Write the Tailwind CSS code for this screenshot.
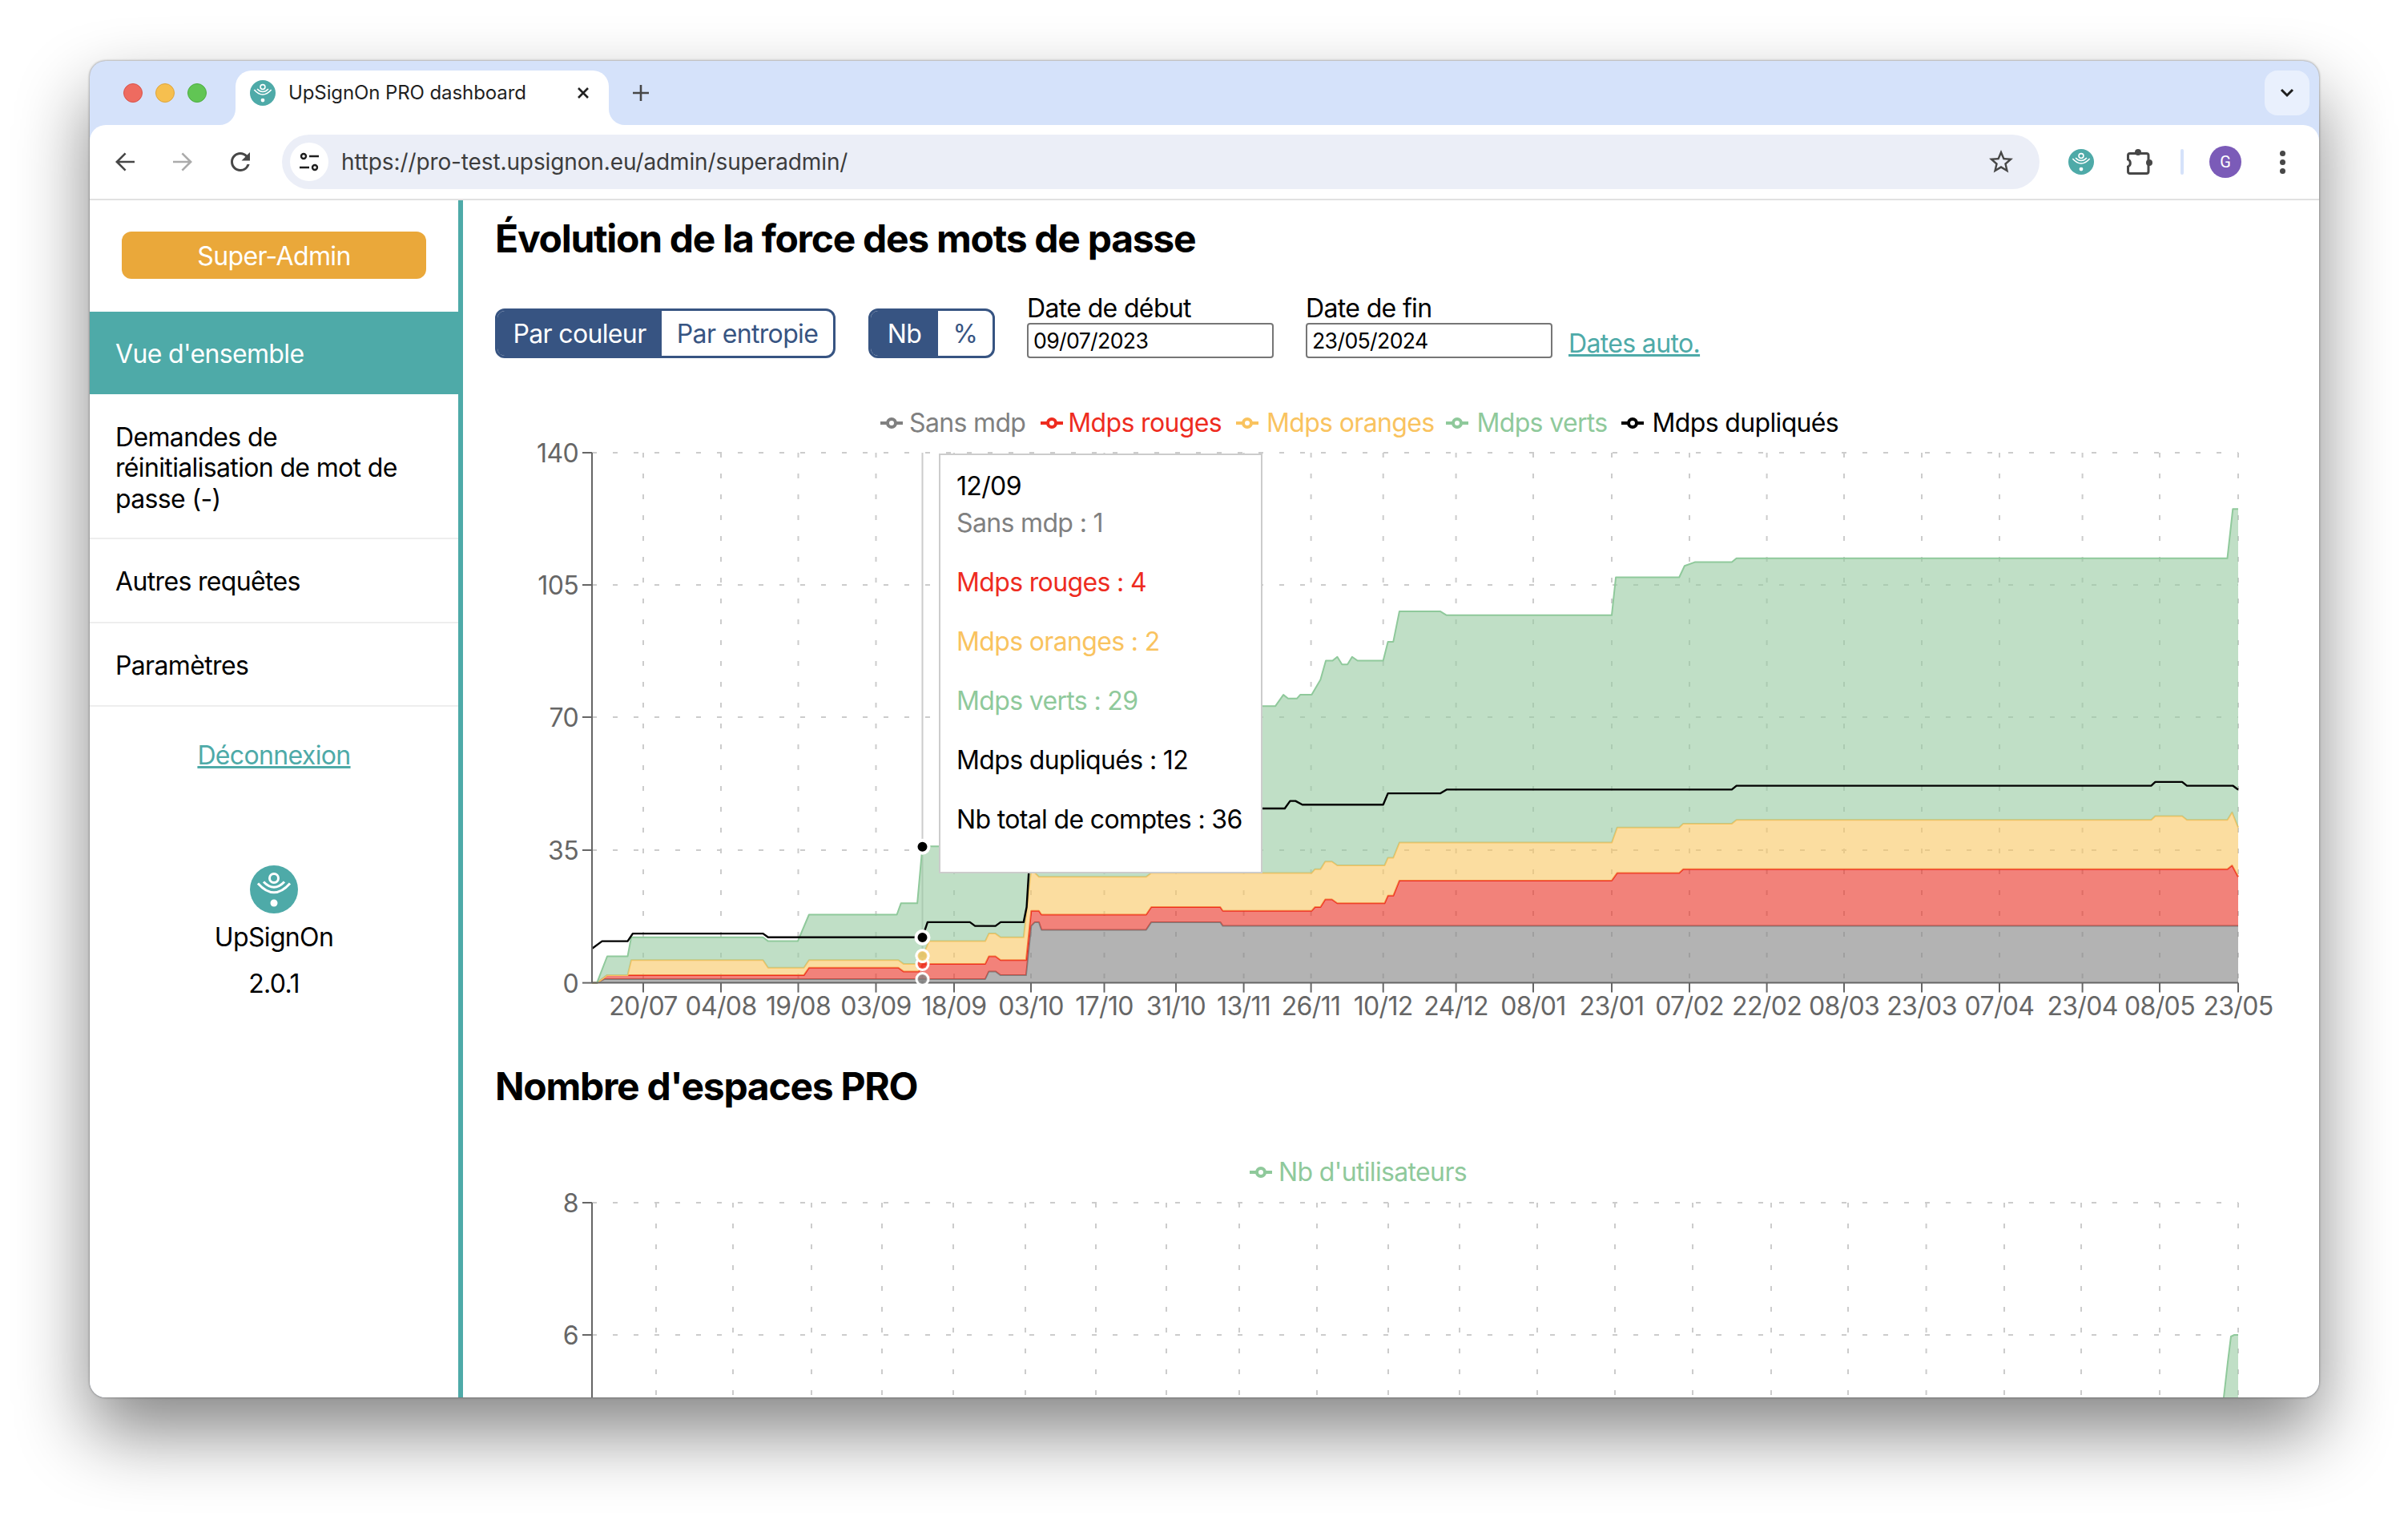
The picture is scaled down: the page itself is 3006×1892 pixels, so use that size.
<!DOCTYPE html>
<html lang="fr">
<head>
<meta charset="utf-8">
<title>UpSignOn PRO dashboard</title>
<script src="https://cdn.jsdelivr.net/npm/@tailwindcss/browser@4"></script>
</head>
<body class="w-[3006px] h-[1892px] overflow-hidden bg-white font-['Inter',sans-serif] text-black">
<svg class="hidden"><symbol id="logo" viewBox="0 0 60 60"><circle cx="30" cy="30" r="30" fill="#4eaaa8"/><circle cx="30" cy="16" r="5.5" fill="none" stroke="#fff" stroke-width="3"/><path d="M17 20.5Q30 34 43 20.5" fill="none" stroke="#fff" stroke-width="3"/><path d="M10 22.500Q30 45 50 22.500" fill="none" stroke="#fff" stroke-width="3"/><circle cx="30" cy="47" r="4.500" fill="#fff"/></symbol></svg>
<div class="pt-[76px] pl-[112px]">
<div class="w-[2783px] h-[1668px] rounded-[20px] overflow-hidden bg-[#d5e2fa] flex flex-col shadow-[0_44px_90px_rgba(0,0,0,0.48),0_0_3px_rgba(0,0,0,0.5)]">
  <!-- tab strip -->
  <div class="h-[80px] shrink-0 flex items-end relative">
    <div class="flex gap-[16px] ml-[42px] mb-[28px]">
      <span class="w-[24px] h-[24px] rounded-full bg-[#ee6b60] border border-[#d9534a]"></span>
      <span class="w-[24px] h-[24px] rounded-full bg-[#f6bf4f] border border-[#dfa53a]"></span>
      <span class="w-[24px] h-[24px] rounded-full bg-[#61c554] border border-[#4ead41]"></span>
    </div>
    <div class="relative ml-[36px] w-[466px] h-[68px] bg-white rounded-t-[20px] flex items-center pl-[18px] pb-[12px]">
      <svg class="absolute -left-[20px] bottom-0 w-[20px] h-[20px]" viewBox="0 0 20 20"><path d="M20 0V20H0A20 20 0 0 0 20 0Z" fill="#fff"/></svg>
      <svg class="absolute -right-[20px] bottom-0 w-[20px] h-[20px]" viewBox="0 0 20 20"><path d="M0 0V20H20A20 20 0 0 1 0 0Z" fill="#fff"/></svg>
      <svg class="w-[32px] h-[32px] shrink-0"><use href="#logo"/></svg>
      <span class="ml-[16px] text-[24px] leading-[32px] text-[#1f1f1f] whitespace-nowrap tracking-[-0.1px]">UpSignOn PRO dashboard</span>
      <svg class="absolute left-[426px] top-[20px] w-[16px] h-[16px]" viewBox="0 0 16 16"><path d="M2 2L14 14M14 2L2 14" stroke="#222" stroke-width="2.600"/></svg>
    </div>
    <svg class="ml-[29px] mb-[29px] w-[22px] h-[22px]" viewBox="0 0 22 22"><path d="M11 1V21M1 11H21" stroke="#474747" stroke-width="2.600"/></svg>
    <div class="ml-auto mr-[12px] mb-[12px] w-[56px] h-[56px] rounded-[16px] bg-[#e9f0fd] flex items-center justify-center">
      <svg class="w-[18px] h-[12px]" viewBox="0 0 18 12"><path d="M2 2L9 9L16 2" fill="none" stroke="#1f1f1f" stroke-width="3"/></svg>
    </div>
  </div>
  <!-- toolbar -->
  <div class="h-[94px] shrink-0 bg-white rounded-t-[20px] border-b-2 border-[#e1e1e1] flex items-center">
    <svg class="ml-[26px] w-[36px] h-[36px]" viewBox="0 0 24 24" fill="#474747"><path d="M20 11.100H7.400l5.600-5.600L11.800 4.300 4 12l7.800 7.700 1.200-1.200-5.600-5.600H20z"/></svg>
    <svg class="ml-[36px] w-[36px] h-[36px]" viewBox="0 0 24 24" fill="#ababab"><path d="M4 11.100h12.600L11 5.500l1.200-1.200L20 12l-7.800 7.700-1.200-1.200 5.600-5.600H4z"/></svg>
    <svg class="ml-[36px] w-[36px] h-[36px]" viewBox="0 0 24 24" fill="#474747"><path d="M17.650 6.350A7.958 7.958 0 0012 4c-4.420 0-7.990 3.580-7.990 8s3.570 8 7.990 8c3.730 0 6.840-2.550 7.730-6h-2.080A5.990 5.990 0 0112 18c-3.310 0-6-2.690-6-6s2.690-6 6-6c1.660 0 3.140.69 4.220 1.780L13 11h7V4l-2.350 2.350z"/></svg>
    <div class="ml-[34px] w-[2194px] h-[68px] rounded-full bg-[#ebeef7] flex items-center pl-[10px]">
      <div class="w-[48px] h-[48px] rounded-full bg-white flex items-center justify-center">
        <svg class="w-[26px] h-[26px]" viewBox="0 0 26 26" fill="none" stroke="#1f1f1f" stroke-width="2.400"><circle cx="6" cy="6" r="3"/><path d="M13 6H25M1 20H13"/><circle cx="20" cy="20" r="3"/></svg>
      </div>
      <span class="ml-[16px] text-[28px] leading-[40px] text-[#3c3c3c] whitespace-nowrap tracking-[-0.12px]">https://pro-test.upsignon.eu/admin/superadmin/</span>
      <svg class="ml-auto mr-[30px] w-[36px] h-[36px]" viewBox="0 0 24 24" fill="#474747"><path d="M22 9.240l-7.190-.62L12 2 9.190 8.630 2 9.240l5.460 4.730L5.820 21 12 17.270 18.180 21l-1.630-7.030L22 9.240zM12 15.400l-3.760 2.270 1-4.280-3.320-2.880 4.380-.38L12 6.100l1.710 4.040 4.380.38-3.320 2.880 1 4.280L12 15.400z"/></svg>
    </div>
    <svg class="ml-[36px] w-[32px] h-[32px]"><use href="#logo"/></svg>
    <svg class="ml-[39px] w-[34px] h-[34px]" viewBox="0 0 34 34"><path d="M6 6.500H26.500A2.500 2.500 0 0 1 29 9V13.500V22.500V29A2.500 2.500 0 0 1 26.500 31.500H6A2.500 2.500 0 0 1 3.500 29V23A5 5 0 0 0 3.500 14V9A2.500 2.500 0 0 1 6 6.500Z" fill="none" stroke="#474747" stroke-width="3"/><circle cx="16" cy="5" r="4" fill="#474747"/><circle cx="30" cy="18" r="4" fill="#474747"/></svg>
    <span class="ml-[35px] w-[4px] h-[32px] rounded-full bg-[#d5e2fa]"></span>
    <div class="ml-[32px] w-[40px] h-[40px] rounded-full bg-[#7b5bb8] flex items-center justify-center text-[20px] leading-none text-white font-['Roboto',sans-serif]">G</div>
    <div class="ml-[48px] flex flex-col gap-[4px]">
      <span class="w-[7px] h-[7px] rounded-full bg-[#474747]"></span>
      <span class="w-[7px] h-[7px] rounded-full bg-[#474747]"></span>
      <span class="w-[7px] h-[7px] rounded-full bg-[#474747]"></span>
    </div>
  </div>
  <!-- page -->
  <div class="flex-1 min-h-0 flex bg-white">
    <aside class="w-[466px] shrink-0 border-r-[6px] border-[#4eaaa8] flex flex-col items-stretch tracking-[-0.65px]">
      <div class="px-[40px] pt-[39px] pb-[41px]">
        <div class="h-[59px] rounded-[12px] bg-[#eaa83a] text-white text-[32px] leading-[61px] text-center">Super-Admin</div>
      </div>
      <div class="h-[103px] bg-[#4eaaa8] text-white text-[32px] leading-[38.400px] px-[32px] pt-[34px]">Vue d'ensemble</div>
      <div class="text-[32px] leading-[38.400px] px-[32px] pt-[35px] pb-[29px] border-b-2 border-[#eeeeee]">Demandes de réinitialisation de mot de passe (-)</div>
      <div class="text-[32px] leading-[38.400px] px-[32px] pt-[34px] pb-[30px] border-b-2 border-[#eeeeee]">Autres requêtes</div>
      <div class="text-[32px] leading-[38.400px] px-[32px] pt-[34px] pb-[30px] border-b-2 border-[#eeeeee]">Paramètres</div>
      <div class="mt-[41px] text-center text-[32px] leading-[40px] text-[#4eaaa8] underline">Déconnexion</div>
      <div class="mt-[117px] flex flex-col items-center text-[32px]">
        <svg class="w-[60px] h-[60px]"><use href="#logo"/></svg>
        <div class="mt-[10px] leading-[40px]">UpSignOn</div>
        <div class="mt-[18px] leading-[40px]">2.0.1</div>
      </div>
    </aside>
    <main class="flex-1 min-w-0 overflow-hidden tracking-[-0.65px]">
      <h1 class="pl-[40px] pt-[19px] text-[48px] leading-[58px] font-bold tracking-[-1.28px]">Évolution de la force des mots de passe</h1>
      <div class="pl-[40px] mt-[38px] flex items-end text-[32px]">
        <div class="flex h-[62px] w-[425px] rounded-[12px] border-[3px] border-[#375482] overflow-hidden leading-[58px]">
          <div class="w-[205px] bg-[#375482] text-white text-center">Par couleur</div>
          <div class="flex-1 text-[#375482] text-center">Par entropie</div>
        </div>
        <div class="ml-[41px] flex h-[62px] w-[158px] rounded-[12px] border-[3px] border-[#375482] overflow-hidden leading-[58px]">
          <div class="w-[84px] bg-[#375482] text-white text-center">Nb</div>
          <div class="flex-1 text-[#375482] text-center">%</div>
        </div>
        <label class="ml-[40px] block w-[308px]">
          <div class="leading-[38px] relative top-[1px]">Date de début</div>
          <input type="text" value="09/07/2023" class="block w-full h-[44px] border-2 border-[#767676] rounded-[4px] px-[6px] text-[26.670px] text-black bg-white">
        </label>
        <label class="ml-[40px] block w-[308px]">
          <div class="leading-[38px] relative top-[1px]">Date de fin</div>
          <input type="text" value="23/05/2024" class="block w-full h-[44px] border-2 border-[#767676] rounded-[4px] px-[6px] text-[26.670px] text-black bg-white">
        </label>
        <div class="ml-[20px] leading-[36px] text-[#4eaaa8] underline">Dates auto.</div>
      </div>
      <div class="mt-[61px] mb-[-1px] h-[40px] ml-[521px] flex items-center text-[32px] leading-[40px] whitespace-nowrap">
        <svg class="w-[28px] h-[14px] mr-[8px]" viewBox="0 0 28 14"><path d="M0 7H28" stroke="#808080" stroke-width="4"/><circle cx="14" cy="7" r="5" fill="#fff" stroke="#808080" stroke-width="4"/></svg><span class="text-[#808080]">Sans mdp</span>
        <svg class="ml-[19px] w-[28px] h-[14px] mr-[6px]" viewBox="0 0 28 14"><path d="M0 7H28" stroke="#ee2c1f" stroke-width="4"/><circle cx="14" cy="7" r="5" fill="#fff" stroke="#ee2c1f" stroke-width="4"/></svg><span class="text-[#ee2c1f]">Mdps rouges</span>
        <svg class="ml-[18px] w-[28px] h-[14px] mr-[10px]" viewBox="0 0 28 14"><path d="M0 7H28" stroke="#f9c35f" stroke-width="4"/><circle cx="14" cy="7" r="5" fill="#fff" stroke="#f9c35f" stroke-width="4"/></svg><span class="text-[#f9c35f]">Mdps oranges</span>
        <svg class="ml-[15px] w-[28px] h-[14px] mr-[10px]" viewBox="0 0 28 14"><path d="M0 7H28" stroke="#8fc99b" stroke-width="4"/><circle cx="14" cy="7" r="5" fill="#fff" stroke="#8fc99b" stroke-width="4"/></svg><span class="text-[#8fc99b]">Mdps verts</span>
        <svg class="ml-[17px] w-[28px] h-[14px] mr-[11px]" viewBox="0 0 28 14"><path d="M0 7H28" stroke="#000" stroke-width="4"/><circle cx="14" cy="7" r="5" fill="#fff" stroke="#000" stroke-width="4"/></svg><span>Mdps dupliqués</span>
      </div>
      <div class="relative h-[743px]">
        <svg id="chart1" class="block w-[2316px] h-[743px]" viewBox="578 547 2316 743" font-size="32" fill="#666"></svg>
        <div class="absolute left-[594px] top-[19px] w-[404px] h-[524px] bg-white border-2 border-[#cccccc] pl-[20px] pt-[15px] text-[32px] leading-[48px] whitespace-nowrap">
          <div class="h-[46px]">12/09</div>
          <div class="h-[74px] text-[#808080]">Sans mdp : 1</div>
          <div class="h-[74px] text-[#ee2c1f]">Mdps rouges : 4</div>
          <div class="h-[74px] text-[#f9c35f]">Mdps oranges : 2</div>
          <div class="h-[74px] text-[#8fc99b]">Mdps verts : 29</div>
          <div class="h-[74px]">Mdps dupliqués : 12</div>
          <div>Nb total de comptes : 36</div>
        </div>
      </div>
      <h2 class="pl-[40px] mt-[37px] text-[48px] leading-[58px] font-bold tracking-[-1.28px]">Nombre d'espaces PRO</h2>
      <div class="mt-[58px] h-[40px] ml-[982px] flex items-center text-[32px] leading-[40px] text-[#8fc99b] whitespace-nowrap">
        <svg class="w-[28px] h-[14px] mr-[8px]" viewBox="0 0 28 14"><path d="M0 7H28" stroke="#8fc99b" stroke-width="4"/><circle cx="14" cy="7" r="5" fill="#fff" stroke="#8fc99b" stroke-width="4"/></svg><span>Nb d'utilisateurs</span>
      </div>
      <svg id="chart2" class="block w-[2316px] h-[261px]" viewBox="578 1483 2316 261" font-size="32" fill="#666"></svg>
    </main>
  </div>
</div>
</div>
<script>
const NS='http://www.w3.org/2000/svg';
function el(p,n,a,t){const e=document.createElementNS(NS,n);for(const k in a)e.setAttribute(k,a[k]);if(t!==undefined)e.textContent=t;p.appendChild(e);return e;}
const X5=x=>640+x/1.568,X6=x=>1560+x/1.188,Y=v=>1226.6-v*4.73;
const mk=(a,b)=>a.map(p=>[X5(p[0]),Y(p[1])]).concat(b.map(p=>[X6(p[0]),Y(p[1])]));
const gray=mk([[155,0],[165,0],[180,1],[925,1],[932,3],[945,3],[955,2],[1005,2],[1015,15],[1022,16],[1030,16],[1035,14],[1240,14],[1250,16],[1385,16],[1390,15]],[[1466,15]]);
const red=mk([[155,0],[165,0],[185,2],[570,2],[580,4],[755,4],[765,3],[795,3],[802,5],[925,5],[932,7],[945,7],[955,6],[1005,6],[1015,19],[1030,19],[1035,18],[1240,18],[1250,20],[1385,20],[1390,19]],[[92,19],[97,20],[105,20],[112,22],[122,22],[130,21],[200,21],[205,23],[213,23],[222,27],[537,27],[545,29],[637,29],[643,30],[1450,30],[1457,31],[1466,28]]);
const orange=mk([[155,0],[165,0],[185,2],[225,2],[232,6],[490,6],[500,4],[570,4],[580,6],[755,6],[765,5],[795,5],[802,7],[815,11],[925,11],[932,13],[945,13],[955,12],[1000,12],[1015,30],[1030,28],[1240,28],[1250,29]],[[92,29],[97,30],[105,30],[112,32],[122,32],[130,31],[200,31],[205,33],[213,33],[222,37],[537,37],[545,41],[637,41],[643,42],[715,42],[722,43],[1337,43],[1343,44],[1383,44],[1390,43],[1450,43],[1457,45],[1466,41]]);
const green=mk([[155,0],[165,0],[185,7],[225,7],[232,12],[490,12],[500,11],[558,11],[580,18],[752,18],[760,21],[792,21],[802,36],[1000,36],[1010,50],[1465,73]],[[18,73],[38,73],[50,76],[57,75],[70,75],[75,76],[92,76],[105,80],[113,85],[123,85],[130,86],[137,84],[145,84],[152,86],[160,85],[198,85],[205,90],[213,90],[222,98],[283,98],[292,97],[537,97],[543,107],[637,107],[645,110],[660,111],[715,111],[722,112],[1450,112],[1458,125],[1466,125]]);
const black=mk([[155,9],[175,11],[225,11],[235,13],[490,13],[500,12],[802,12],[812,16],[895,16],[905,15],[945,15],[955,16],[1000,16],[1006,20],[1012,33],[1020,40]],[[18,46],[52,46],[60,48],[68,48],[78,47],[198,47],[205,50],[283,50],[292,51],[715,51],[722,52],[1337,52],[1343,53],[1383,53],[1390,52],[1458,52],[1466,51]]);
const str=a=>a.map(p=>p[0].toFixed(1)+','+p[1].toFixed(1)).join(' ');
const c1=document.getElementById('chart1');
const ticks=[803,900,996.5,1093.5,1191,1287,1378.5,1468,1552.6,1636.6,1726.7,1817.6,1914,2012,2109,2205.6,2302,2399,2496,2599.6,2696,2794];
const labs=['20/07','04/08','19/08','03/09','18/09','03/10','17/10','31/10','13/11','26/11','10/12','24/12','08/01','23/01','07/02','22/02','08/03','23/03','07/04','23/04','08/05','23/05'];
function grid(s,xs,ys,top,bot){
  ys.forEach(y=>el(s,'line',{x1:739,x2:2794,y1:y,y2:y,stroke:'#ccc','stroke-width':2,'stroke-dasharray':'6 20'}));
  xs.forEach(x=>el(s,'line',{x1:x,x2:x,y1:top,y2:bot,stroke:'#ccc','stroke-width':2,'stroke-dasharray':'6 20'}));
}
grid(c1,ticks,[565,730,895,1061],565,1226);
el(c1,'line',{x1:1151.5,x2:1151.5,y1:565,y2:1226,stroke:'#ccc','stroke-width':2});
function area(top,bottom,fill,col){
  el(c1,'polygon',{points:str(top.concat(bottom.slice().reverse())),fill:fill,'fill-opacity':0.6,stroke:'none'});
  el(c1,'polyline',{points:str(top),fill:'none',stroke:col,'stroke-width':2,'stroke-linejoin':'round'});
}
const base=[[X5(155),Y(0)],[X6(1466),Y(0)]];
area(gray,base,'#808080','#808080');area(red,gray,'#e92f22','#ee2c1f');area(orange,red,'#f8c661','#f9c35f');area(green,orange,'#96caa0','#8fc99b');
el(c1,'polyline',{points:str(black),fill:'none',stroke:'#000','stroke-width':2.4,'stroke-linejoin':'round'});
function axes(s,xs,ysv,bot,xl){
  el(s,'line',{x1:739,x2:739,y1:ysv[0][0],y2:bot,stroke:'#666','stroke-width':2});
  ysv.forEach(([y,t])=>{el(s,'line',{x1:727,x2:739,y1:y,y2:y,stroke:'#666','stroke-width':2});el(s,'text',{x:722,y:y+12,'text-anchor':'end'},t);});
  if(xl){
    el(s,'line',{x1:739,x2:2794,y1:bot,y2:bot,stroke:'#666','stroke-width':2});
    xs.forEach((x,i)=>{el(s,'line',{x1:x,x2:x,y1:bot,y2:bot+12,stroke:'#666','stroke-width':2});el(s,'text',{x:x,y:1266.500,'text-anchor':'middle'},labs[i]);});
  }
}
axes(c1,ticks,[[565,'140'],[730,'105'],[895,'70'],[1061,'35'],[1226.6,'0']],1226.6,true);
[[1222,'#808080'],[1203,'#ee2c1f'],[1193,'#8fc99b'],[1193,'#f9c35f']].forEach(([y,c])=>{
  el(c1,'circle',{cx:1151.5,cy:y,r:7,fill:'#fff','fill-opacity':0,stroke:'#fff','stroke-width':4});
  el(c1,'circle',{cx:1151.5,cy:y,r:6,fill:c,'fill-opacity':0.75});
});
[1170,1056.7].forEach(y=>el(c1,'circle',{cx:1151.5,cy:y,r:8,fill:'#000',stroke:'#fff','stroke-width':4}));
const c2=document.getElementById('chart2');
const t2=[819,915,1013,1101,1190,1280,1368,1456,1547,1644,1733,1822,1919,2016,2113,2211,2307,2404.6,2502,2598,2696,2794];
grid(c2,t2,[1501,1666],1501,1744);
el(c2,'polygon',{points:'2776,1744 2781,1700 2785,1668 2789,1666 2794,1666 2794,1744',fill:'#96caa0','fill-opacity':0.6});
el(c2,'polyline',{points:'2776,1744 2781,1700 2785,1668 2789,1666 2794,1666',fill:'none',stroke:'#8fc99b','stroke-width':2});
axes(c2,[],[[1501,'8'],[1666,'6']],1744,false);
</script>
</body>
</html>
